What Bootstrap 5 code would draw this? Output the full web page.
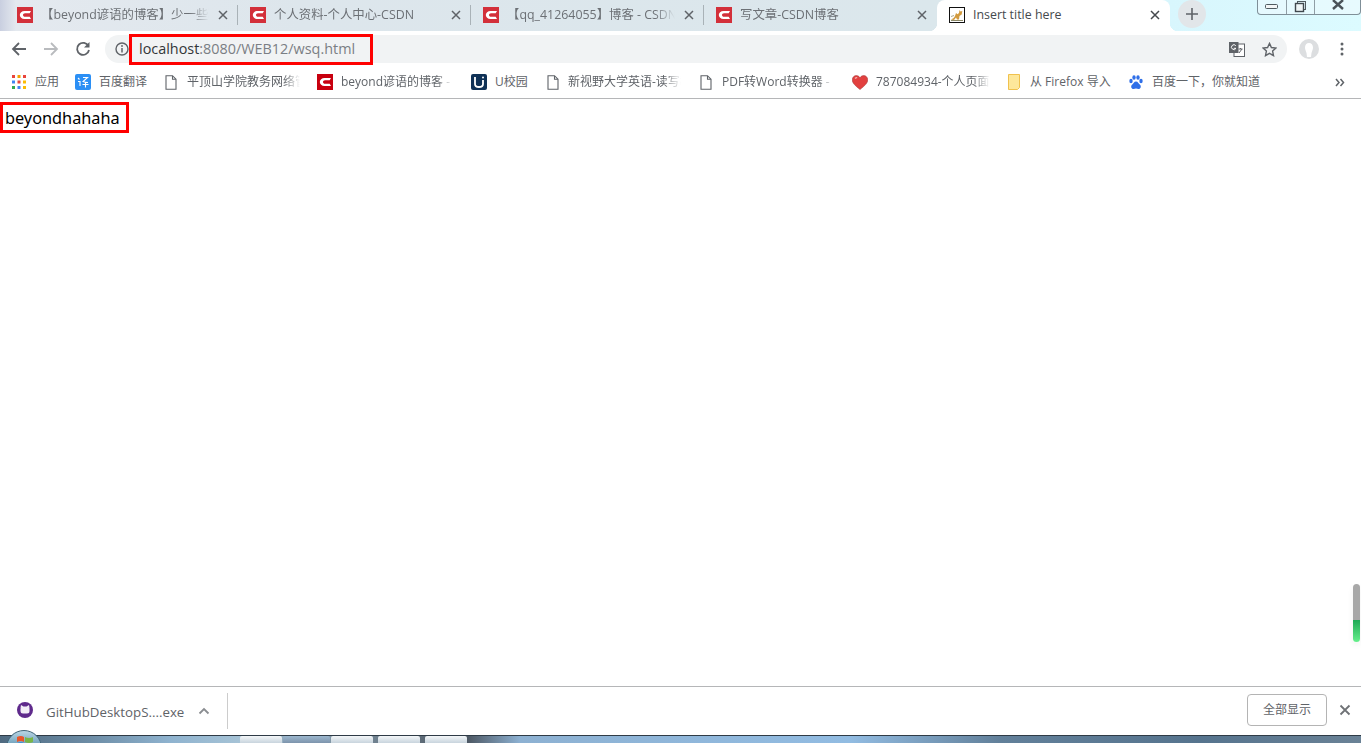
<!DOCTYPE html>
<html lang="en">
<head>
    <meta charset="UTF-8">
    <title>Insert title here</title>
    <meta name="viewport" content="width=device-width, initial-scale=1">
    <link href="https://cdn.jsdelivr.net/npm/bootstrap@5.3.3/dist/css/bootstrap.min.css" rel="stylesheet">
    <style>
        html, body { height: 100%; margin: 0; overflow: hidden; }
        body {
            background: #fff;
            font-family: "Open Sans", "Noto Sans CJK SC", sans-serif;
            font-size: 12px;
            color: #5f6368;
        }
        .shell { height: 743px; width: 1361px; position: relative; overflow: hidden; }

        /* tab strip */
        .tab-strip {
            height: 31px;
            padding-left: 5px;
            background: linear-gradient(90deg, #c9cfe0 0, #e4e9ef 16px, #dde6ec 300px, #dbe7ec 937px, #d8f6fd 1170px, #dcfbff 1361px);
        }
        .tab-item {
            width: 233px;
            height: 31px;
            padding: 0 9px 2px 12px;
            gap: 8px;
            white-space: nowrap;
        }
        .tab-sep { position: relative; }
        .tab-sep::after {
            content: "";
            position: absolute;
            right: 0; top: 5px; bottom: 6px;
            width: 1px;
            background: #a9b2b7;
        }
        .tab-active { background: #fff; border-radius: 8px 8px 0 0; color: #45494d; position: relative; }
        .tab-active::before, .tab-active::after {
            content: "";
            position: absolute;
            bottom: 0;
            width: 8px; height: 8px;
        }
        .tab-active::before { left: -8px; background: radial-gradient(circle at 0 0, transparent 8px, #fff 8.5px); }
        .tab-active::after { right: -8px; background: radial-gradient(circle at 100% 0, transparent 8px, #fff 8.5px); }
        .tab-title {
            flex: 1 1 auto;
            overflow: hidden;
            min-width: 0;
            margin-top: 1px;
            font-size: 12.4px;
            color: #6c7075;
            -webkit-mask-image: linear-gradient(90deg, #000 88%, transparent);
            mask-image: linear-gradient(90deg, #000 88%, transparent);
        }
        .tab-active .tab-title { color: #45494d; -webkit-mask-image: none; mask-image: none; }
        .tab-close { width: 12px; height: 12px; flex: none; }
        .csdn-tab { width: 16px; height: 16px; flex: none; }
        .new-tab {
            width: 28px; height: 28px;
            margin-left: 8px;
            background: #e2e6e9;
            border-radius: 50%;
        }
        .win-ctrls {
            position: absolute;
            right: 0; top: 0;
            width: 104px; height: 15px;
            border: 1px solid #7f8f98;
            border-top: 0;
            border-radius: 0 0 4px 4px;
            background: rgba(235, 250, 253, .7);
        }
        .win-ctrls > div { height: 100%; }
        .win-ctrls > div + div { border-left: 1px solid #8f9da5; }
        .win-min { width: 28px; }
        .win-max { width: 28px; }

        /* toolbar */
        .tool-row { height: 35px; padding: 4px 0 0 0; }
        .nav-btn { width: 16px; height: 16px; margin: 6px 8px 0 8px; flex: none; }
        .nav-back { margin-left: 11px; }
        .addr-bar {
            position: relative;
            width: 1182px;
            height: 28px;
            margin-left: 6px;
            padding: 0 10px 0 10px;
            background: #f1f3f4;
            border-radius: 14px;
            font-size: 14.4px;
            color: #7b7f84;
        }
        .addr-host { color: #333639; }
        .addr-text { margin-left: 10px; white-space: nowrap; }
        .url-box {
            position: absolute;
            left: 24px; top: -1px;
            width: 244px; height: 31px;
            border: 3px solid #f00;
        }
        .addr-tools { gap: 17px; }
        .avatar-btn { margin: 4px 0 0 12px; flex: none; }
        .menu-btn { margin: 7px 0 0 21px; flex: none; }

        /* bookmarks */
        .bm-row {
            height: 33px;
            border-bottom: 1px solid #b5b6b8;
            position: relative;
        }
        .bm-item {
            position: absolute;
            top: 8px;
            display: flex;
            align-items: center;
            white-space: nowrap;
            height: 16px;
            font-size: 12px;
            color: #5f6368;
        }
        .bm-text { overflow: hidden; position: absolute; top: 0; line-height: 16px; }
        .bm-fade {
            -webkit-mask-image: linear-gradient(90deg, #000 85%, transparent);
            mask-image: linear-gradient(90deg, #000 85%, transparent);
        }

        /* page content */
        .page-area { height: 587px; padding-top: 3px; position: relative; }
        .page-word {
            display: inline-block;
            border: 3px solid #f00;
            padding: 0 6px 0 2px;
            height: 31px;
            line-height: 27px;
            font-family: "Noto Sans", "Open Sans", sans-serif;
            font-size: 16.3px;
            color: #000;
        }
        .side-gadget {
            position: absolute;
            right: 1px; top: 485px;
            width: 7px; height: 58px;
            border-radius: 4px;
            background: linear-gradient(180deg, #a8a8a8 0, #a8a8a8 36px, #1fa855 36px, #66f08c 100%);
            box-shadow: 0 3px 6px rgba(0,0,0,.06);
        }

        /* download bar */
        .dl-bar {
            height: 49px;
            border-top: 1px solid #b5b6b8;
            background: #fff;
            font-size: 13px;
            padding-left: 17px;
        }
        .dl-icon { margin-bottom: 3px; }
        .dl-name { margin: 3px 0 0 13px; width: 152px; white-space: nowrap; color: #5f6368; font-size: 13.3px; }
        .dl-divider { width: 1px; height: 36px; background: #ccc; margin-left: 17px; }
        .dl-show {
            width: 80px; height: 32px;
            border: 1px solid #b4b4b4;
            border-radius: 4px;
            background: #fff;
            font-size: 12px;
            color: #5f6368;
            padding: 0;
            margin: 0 12px 2px 0;
        }
        .dl-close { width: 12px; height: 12px; margin: 0 10px 2px 0; }

        /* taskbar */
        .task-bar {
            height: 8px;
            border-top: 1px solid #2f3b46;
            background: linear-gradient(90deg, #4f6a80 0, #6d8da6 90px, #8fb3cf 170px, #a6c3d6 240px, #4b5560 466px, #8db1d2 520px, #92bce2 850px, #62809a 1000px, #56748e 1200px, #6a8296 1361px);
            padding-left: 240px;
            gap: 1px;
        }
        .task-btn {
            height: 7px;
            width: 42px;
            background: linear-gradient(180deg, #f4f7f9, #c8d4dd);
            border-radius: 2px 2px 0 0;
        }
        .task-btn.dim { width: 47px; background: linear-gradient(180deg, #9db8cf, #7d94ac); }
        .start-orb {
            position: absolute;
            left: 6px; top: 730px;
            width: 36px; height: 36px;
            border-radius: 50%;
            border: 1px solid #3f6478;
            background: linear-gradient(180deg, #b9d6e4, #4b86a8 60%);
        }
        .start-flag { position: absolute; left: 9px; top: 4px; }
    </style>
</head>
<body>
    <div class="shell d-flex flex-column">
        <!-- tab strip -->
        <div class="tab-strip d-flex align-items-start flex-shrink-0">
            <div class="tab-item tab-sep d-flex align-items-center">
                <svg class="csdn-tab" viewBox="0 0 16 16"><rect width="16" height="16" fill="#d3303a"/><path d="M14 4H7.500C4.800 4 2.800 5.800 2.800 8s2 4 4.700 4H14L12.700 9.800H8C6.900 9.800 6 9 6 8s.9-1.800 2-1.800h4.700z" fill="#fff"/></svg>
                <span class="tab-title">【beyond谚语的博客】少一些功利</span>
                <svg class="tab-close" viewBox="0 0 12 12"><path d="M2 2l8 8M10 2l-8 8" stroke="#5f6368" stroke-width="1.5"/></svg>
            </div>
            <div class="tab-item tab-sep d-flex align-items-center">
                <svg class="csdn-tab" viewBox="0 0 16 16"><rect width="16" height="16" fill="#d3303a"/><path d="M14 4H7.500C4.800 4 2.800 5.800 2.800 8s2 4 4.700 4H14L12.700 9.800H8C6.900 9.800 6 9 6 8s.9-1.800 2-1.800h4.700z" fill="#fff"/></svg>
                <span class="tab-title">个人资料-个人中心-CSDN</span>
                <svg class="tab-close" viewBox="0 0 12 12"><path d="M2 2l8 8M10 2l-8 8" stroke="#5f6368" stroke-width="1.5"/></svg>
            </div>
            <div class="tab-item tab-sep d-flex align-items-center">
                <svg class="csdn-tab" viewBox="0 0 16 16"><rect width="16" height="16" fill="#d3303a"/><path d="M14 4H7.500C4.800 4 2.800 5.800 2.800 8s2 4 4.700 4H14L12.700 9.800H8C6.900 9.800 6 9 6 8s.9-1.800 2-1.800h4.700z" fill="#fff"/></svg>
                <span class="tab-title">【qq_41264055】博客 - CSDN博客</span>
                <svg class="tab-close" viewBox="0 0 12 12"><path d="M2 2l8 8M10 2l-8 8" stroke="#5f6368" stroke-width="1.5"/></svg>
            </div>
            <div class="tab-item d-flex align-items-center">
                <svg class="csdn-tab" viewBox="0 0 16 16"><rect width="16" height="16" fill="#d3303a"/><path d="M14 4H7.500C4.800 4 2.800 5.800 2.800 8s2 4 4.700 4H14L12.700 9.800H8C6.900 9.800 6 9 6 8s.9-1.800 2-1.800h4.700z" fill="#fff"/></svg>
                <span class="tab-title">写文章-CSDN博客</span>
                <svg class="tab-close" viewBox="0 0 12 12"><path d="M2 2l8 8M10 2l-8 8" stroke="#5f6368" stroke-width="1.5"/></svg>
            </div>
            <div class="tab-item tab-active d-flex align-items-center">
                <svg class="csdn-tab" viewBox="0 0 16 16"><rect x=".5" y=".5" width="15" height="15" fill="#fff" stroke="#111"/><path d="M2 12.500c2-1 3-1.500 4-3.500l1-3 1.500 1.200L10 6l.5-3 1 1.500 1.800-.5-.6 3.500-2.200 1.500-.5 3.500H8L7 10.500 5 13z" fill="#d29a3e"/><path d="M2 13.500h12" stroke="#8d8a68"/><path d="M2 9.500l3-1" stroke="#a9a88e"/></svg>
                <span class="tab-title">Insert title here</span>
                <svg class="tab-close" viewBox="0 0 12 12"><path d="M2 2l8 8M10 2l-8 8" stroke="#45494d" stroke-width="1.5"/></svg>
            </div>
            <div class="new-tab d-flex align-items-center justify-content-center flex-shrink-0">
                <svg width="14" height="14" viewBox="0 0 14 14"><path d="M7 1v12M1 7h12" stroke="#5f6368" stroke-width="1.6"/></svg>
            </div>
        </div>
        <div class="win-ctrls d-flex">
            <div class="win-min d-flex align-items-center justify-content-center">
                <svg width="14" height="8" viewBox="0 0 14 8"><rect x=".5" y="1.500" width="12" height="4" rx="1" fill="#f4f6f7" stroke="#4f5a60"/></svg>
            </div>
            <div class="win-max d-flex align-items-center justify-content-center">
                <svg width="14" height="12" viewBox="0 0 14 12"><rect x="3.500" y=".5" width="8" height="8" fill="none" stroke="#4f5a60"/><rect x="1.500" y="2.500" width="8" height="8" fill="#eef5f7" stroke="#3f484e" stroke-width="1.400"/></svg>
            </div>
            <div class="d-flex align-items-start justify-content-center flex-fill">
                <svg width="14" height="11" viewBox="0 0 14 11"><path d="M2 0l10 9M12 0L2 9" stroke="#4a5359" stroke-width="2.400"/></svg>
            </div>
        </div>

        <!-- toolbar -->
        <div class="tool-row d-flex align-items-start flex-shrink-0">
            <svg class="nav-btn nav-back" viewBox="0 0 16 16"><path d="M15 8H2M8 2L2 8l6 6" fill="none" stroke="#5f6368" stroke-width="1.800"/></svg>
            <svg class="nav-btn" viewBox="0 0 16 16"><path d="M1 8h13M8 2l6 6-6 6" fill="none" stroke="#b9bbbe" stroke-width="1.800"/></svg>
            <svg class="nav-btn" viewBox="0 0 16 16"><path d="M13.500 5.200A6 6 0 1 0 14 9" fill="none" stroke="#5f6368" stroke-width="1.800"/><path d="M14.500 1v5.400H9z" fill="#5f6368"/></svg>
            <div class="addr-bar d-flex align-items-center">
                <svg width="14" height="14" viewBox="0 0 14 14" class="flex-shrink-0"><circle cx="7" cy="7" r="6" fill="none" stroke="#5f6368" stroke-width="1.400"/><path d="M7 6v4.400" stroke="#5f6368" stroke-width="1.500"/><circle cx="7" cy="4" r=".9" fill="#5f6368"/></svg>
                <span class="addr-text"><span class="addr-host">localhost</span>:8080/WEB12/wsq.html</span>
                <div class="url-box"></div>
                <div class="addr-tools ms-auto d-flex align-items-center">
                    <svg width="16" height="15" viewBox="0 0 16 15"><rect x="5" y="2" width="10.500" height="12.500" fill="#fff" stroke="#5f6368"/><rect x="0" y="0" width="9.500" height="11" fill="#5f6368"/><path d="M6.800 3.700A2.400 2.400 0 1 0 7 6.300H4.800" fill="none" stroke="#fff"/><path d="M9.500 7h4M11.500 6v1M10 11l3-4" stroke="#5f6368" fill="none"/></svg>
                    <svg width="15" height="15" viewBox="0 0 15 15"><path d="M7.500 1.400l1.900 4.100 4.500.5-3.300 3.100.9 4.500-4-2.300-4 2.300.9-4.500L1.100 6l4.500-.5z" fill="none" stroke="#5f6368" stroke-width="1.400"/></svg>
                </div>
            </div>
            <svg class="avatar-btn" width="20" height="20" viewBox="0 0 20 20"><circle cx="10" cy="10" r="10" fill="#dcdee0"/><path d="M10 4c2.500 0 4 2 4 4.500 0 2-1 3.700-1.500 5.500L12 18H8l-.5-4C7 12.200 6 10.500 6 8.500 6 6 7.500 4 10 4z" fill="#fff"/></svg>
            <svg class="menu-btn" width="4" height="14" viewBox="0 0 4 14"><circle cx="2" cy="2" r="1.500" fill="#5f6368"/><circle cx="2" cy="7" r="1.500" fill="#5f6368"/><circle cx="2" cy="12" r="1.500" fill="#5f6368"/></svg>
        </div>

        <!-- bookmarks bar -->
        <div class="bm-row flex-shrink-0">
            <div class="bm-item" style="left:12px">
                <svg width="14" height="14" viewBox="0 0 14 14">
                    <rect width="3" height="3" fill="#e8453c"/><rect x="5.500" width="3" height="3" fill="#f4a300"/><rect x="11" width="3" height="3" fill="#e8453c"/>
                    <rect y="5.500" width="3" height="3" fill="#4285f4"/><rect x="5.500" y="5.500" width="3" height="3" fill="#e8453c"/><rect x="11" y="5.500" width="3" height="3" fill="#fbbc05"/>
                    <rect y="11" width="3" height="3" fill="#34a853"/><rect x="5.500" y="11" width="3" height="3" fill="#4285f4"/><rect x="11" y="11" width="3" height="3" fill="#fbbc05"/>
                </svg>
                <span class="bm-text" style="left:23px;width:24px">应用</span>
            </div>
            <div class="bm-item" style="left:75px">
                <svg width="16" height="16" viewBox="0 0 16 16"><rect width="16" height="16" rx="2" fill="#2b8ff5"/><path d="M3 4l1.500 1.500M3 7.500h2v4.500M8 3.500h4.500L8 7.500c2 1 3 1 5 1M7.500 10.500h6M10.500 8.500v5" fill="none" stroke="#fff" stroke-width="1.100"/></svg>
                <span class="bm-text" style="left:24px;width:48px">百度翻译</span>
            </div>
            <div class="bm-item" style="left:165px">
                <svg width="12" height="15" viewBox="0 0 12 15"><path d="M1 .7h6.500L11 4.200v10H1zM7.500.7v3.500H11" fill="#fff" stroke="#5f6368" stroke-width="1.100"/></svg>
                <span class="bm-text bm-fade" style="left:22px;width:113px">平顶山学院教务网络管理系统</span>
            </div>
            <div class="bm-item" style="left:317px">
                <svg width="16" height="16" viewBox="0 0 16 16"><rect width="16" height="16" fill="#c8000f"/><path d="M14 4H7.500C4.800 4 2.800 5.800 2.800 8s2 4 4.700 4H14L12.700 9.800H8C6.900 9.800 6 9 6 8s.9-1.800 2-1.800h4.700z" fill="#fff"/></svg>
                <span class="bm-text bm-fade" style="left:24px;width:112px">beyond谚语的博客 -</span>
            </div>
            <div class="bm-item" style="left:471px">
                <svg width="16" height="16" viewBox="0 0 16 16"><rect width="16" height="16" rx="2" fill="#0f3156"/><path d="M4 3v7c0 2 1.500 3 4 3s4-1 4-3V6" fill="none" stroke="#fff" stroke-width="1.800"/><circle cx="12" cy="3.500" r="1" fill="#fff"/></svg>
                <span class="bm-text" style="left:24px;width:34px">U校园</span>
            </div>
            <div class="bm-item" style="left:547px">
                <svg width="12" height="15" viewBox="0 0 12 15"><path d="M1 .7h6.500L11 4.200v10H1zM7.500.7v3.500H11" fill="#fff" stroke="#5f6368" stroke-width="1.100"/></svg>
                <span class="bm-text bm-fade" style="left:21px;width:113px">新视野大学英语-读写教程</span>
            </div>
            <div class="bm-item" style="left:700px">
                <svg width="12" height="15" viewBox="0 0 12 15"><path d="M1 .7h6.500L11 4.200v10H1zM7.500.7v3.500H11" fill="#fff" stroke="#5f6368" stroke-width="1.100"/></svg>
                <span class="bm-text bm-fade" style="left:22px;width:112px">PDF转Word转换器 -</span>
            </div>
            <div class="bm-item" style="left:852px">
                <svg width="16" height="15" viewBox="0 0 16 15"><path d="M8 14.500C3 10.500.3 8 .3 4.800.3 2.300 2.200.6 4.300.6 5.800.6 7.200 1.400 8 2.800 8.800 1.400 10.200.6 11.700.6c2.100 0 4 1.700 4 4.200 0 3.200-2.700 5.700-7.700 9.700z" fill="#e2403f" stroke="#a83a3a" stroke-width=".6"/><path d="M3 3.500c.6-.7 1.400-1 2.200-.9" stroke="#f6b0ae" stroke-width="1.200" fill="none"/></svg>
                <span class="bm-text bm-fade" style="left:24px;width:114px">787084934-个人页面</span>
            </div>
            <div class="bm-item" style="left:1008px">
                <svg width="12" height="16" viewBox="0 0 12 16"><path d="M.5.500h11v13l-2 2H.5z" fill="#fde79a" stroke="#f0c14d"/></svg>
                <span class="bm-text" style="left:22px;width:84px">从 Firefox 导入</span>
            </div>
            <div class="bm-item" style="left:1129px">
                <svg width="14" height="15" viewBox="0 0 14 15"><g fill="#2f6fe8"><ellipse cx="2" cy="6" rx="1.700" ry="2.200"/><ellipse cx="5" cy="2.500" rx="1.700" ry="2.300"/><ellipse cx="9" cy="2.500" rx="1.700" ry="2.300"/><ellipse cx="12" cy="6" rx="1.700" ry="2.200"/><path d="M7 6.500c2 0 2.500 2 4 3.200 1.500 1.300.8 4.300-1.500 4.300-1 0-1.700-.4-2.500-.4s-1.500.4-2.500.4c-2.300 0-3-3-1.500-4.300C4.500 8.500 5 6.500 7 6.500z"/></g></svg>
                <span class="bm-text" style="left:23px;width:110px">百度一下，你就知道</span>
            </div>
            <div class="bm-item" style="left:1335px">
                <svg width="10" height="9" viewBox="0 0 10 9"><path d="M1 1l3 3.500L1 8M5.500 1l3 3.500-3 3.500" fill="none" stroke="#5f6368" stroke-width="1.500"/></svg>
            </div>
        </div>

        <!-- page content -->
        <div class="page-area flex-shrink-0">
            <div class="page-word">beyondhahaha</div>
            <div class="side-gadget"></div>
        </div>

        <!-- download shelf -->
        <div class="dl-bar d-flex align-items-center flex-shrink-0">
            <svg width="16" height="16" viewBox="0 0 16 16" class="dl-icon flex-shrink-0"><circle cx="8" cy="8" r="8" fill="#5f2a8c"/><rect x="3.500" y="4.500" width="9" height="7" rx="2.500" fill="#f3eef7"/><path d="M3.500 6l.5-3 2.500 1.500M12.500 6L12 3 9.500 4.500" fill="#f3eef7"/></svg>
            <span class="dl-name">GitHubDesktopS....exe</span>
            <svg width="12" height="8" viewBox="0 0 12 8" class="flex-shrink-0"><path d="M1.500 6.500L6 2l4.500 4.500" fill="none" stroke="#8a8d91" stroke-width="1.800"/></svg>
            <div class="dl-divider"></div>
            <button class="dl-show btn ms-auto" type="button">全部显示</button>
            <svg class="dl-close flex-shrink-0" viewBox="0 0 12 12"><path d="M1.500 1.500l9 9M10.500 1.500l-9 9" stroke="#6f7276" stroke-width="1.800"/></svg>
        </div>

        <!-- desktop taskbar edge -->
        <div class="task-bar d-flex flex-shrink-0">
            <div class="task-btn"></div>
            <div class="task-btn dim"></div>
            <div class="task-btn"></div>
            <div class="task-btn ms-1"></div>
            <div class="task-btn ms-1"></div>
        </div>
        <div class="start-orb">
            <svg class="start-flag" width="18" height="12" viewBox="0 0 18 12"><path d="M1 2q4-2 7 0v5q-3-2-7 0z" fill="#e8562b"/><path d="M9 2q4 2 8 0v5q-4 2-8 0z" fill="#7ab648"/><path d="M1 8q4-2 7 0v4H1z" fill="#3f8fd8"/><path d="M9 8q4 2 8 0v4H9z" fill="#f4c430"/></svg>
        </div>
    </div>
    <script src="https://cdn.jsdelivr.net/npm/bootstrap@5.3.3/dist/js/bootstrap.bundle.min.js"></script>
</body>
</html>
